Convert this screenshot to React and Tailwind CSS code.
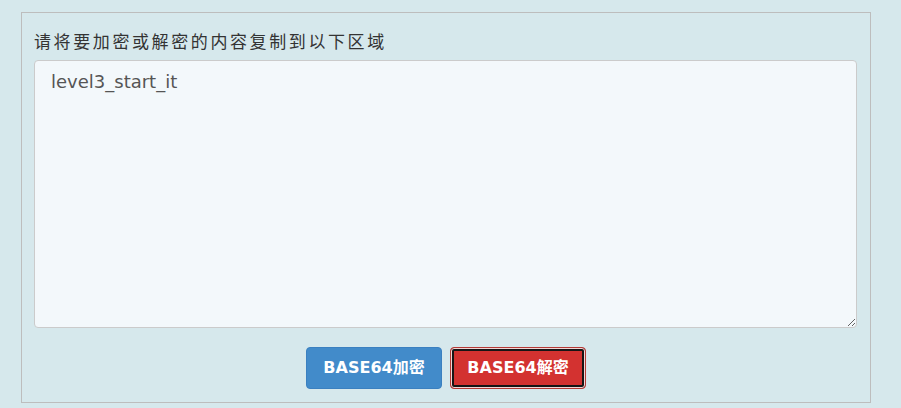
export default function App() {
  return (
    <div className="h-[408px] w-[901px] overflow-hidden bg-[#d6e8ec] pt-3 pl-[21px] font-['DejaVu_Sans','Noto_Sans_CJK_SC',sans-serif]">
      <div className="flex h-[391px] w-[850px] flex-col border border-[#bdbdbd] px-3 pt-[18px]">
        <label className="mb-[9px] h-[20px] text-[17px] leading-[20px] tracking-[2.6px] text-[#333] font-['Noto_Sans_CJK_SC',sans-serif]">
          请将要加密或解密的内容复制到以下区域
        </label>
        <textarea
          defaultValue="level3_start_it"
          className="h-[268px] w-[823px] resize-y rounded-[4px] border border-[#cbcbcb] bg-[#f3f8fb] px-4 py-[8px] text-[18px] leading-[26px] text-[#555] outline-none"
        />
        <div className="mt-[19px] flex justify-center gap-2">
          <button className="h-[42px] w-[136px] rounded-[4px] border border-[#3b80c0] bg-[#428bca] text-[16px] font-bold text-white">
            BASE64加密
          </button>
          <button className="h-[42px] w-[136px] rounded-[4px] border border-[#b33a36] bg-[#d33230] text-[16px] font-bold text-white shadow-[inset_0_0_0_1px_#f2d6d6,inset_0_0_0_3px_#151515]">
            BASE64解密
          </button>
        </div>
      </div>
    </div>
  );
}
